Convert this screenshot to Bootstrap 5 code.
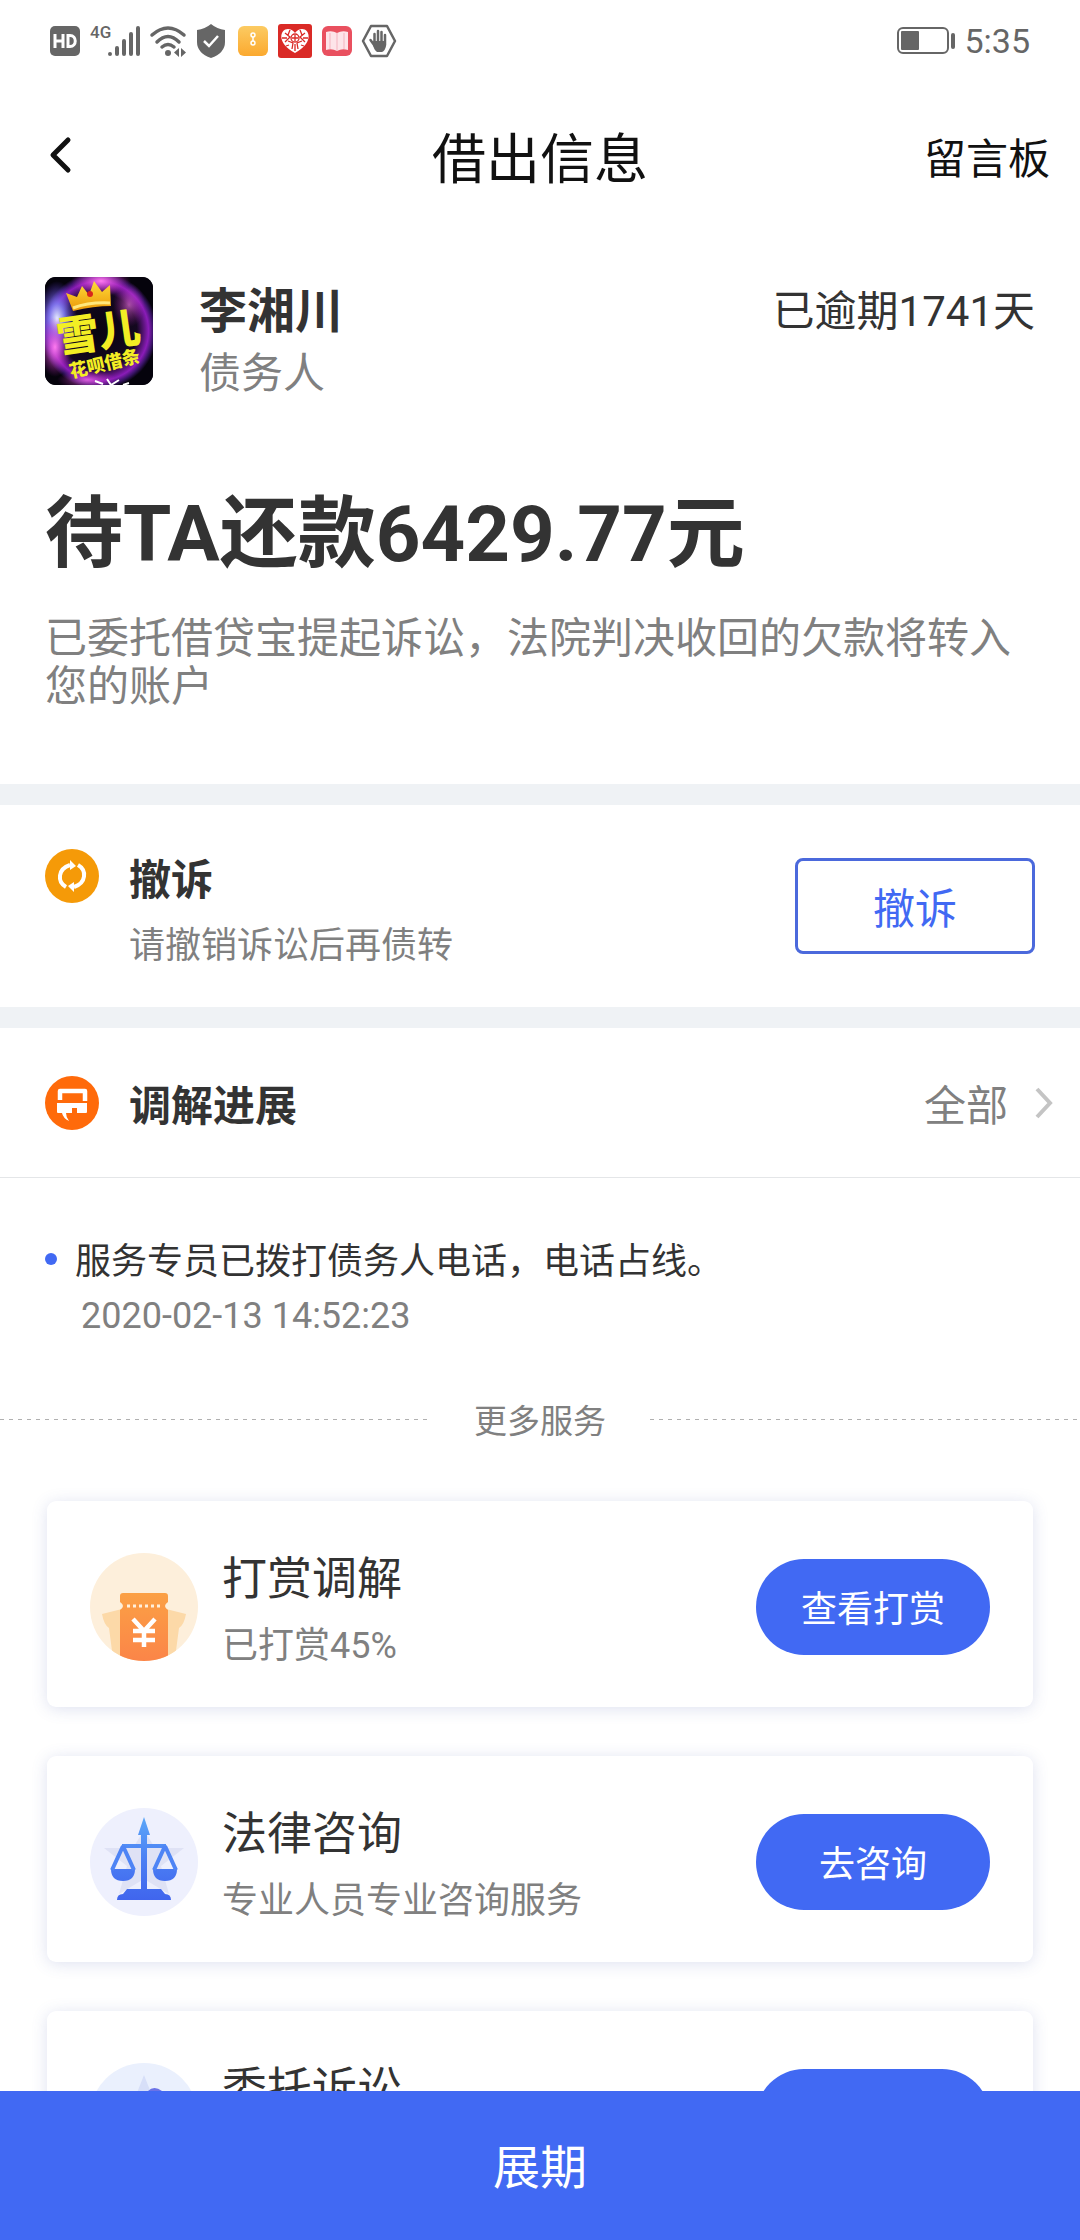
<!DOCTYPE html>
<html lang="zh-CN">
<head>
<meta charset="utf-8">
<meta name="viewport" content="width=device-width, initial-scale=1">
<title>借出信息</title>
<link href="https://cdn.jsdelivr.net/npm/bootstrap@5.3.0/dist/css/bootstrap.min.css" rel="stylesheet">
<style>
  :root { --ink: #333; --muted-ink: #808080; --brand: #4169f3; }
  body { font-family: Roboto, "Noto Sans CJK SC", sans-serif; font-size: 36px; line-height: 48px; color: var(--ink); background: #fff; }
  svg { display: block; flex: none; overflow: visible; }
  .status-bar { height: 82px; padding: 0 50px; color: #666; font-size: 34px; }
  .status-icons { gap: 10px; }
  .title-bar { height: 154px; padding: 4px 30px 0; color: #111; }
  .title-bar h1 { font-size: 54px; line-height: 64px; font-weight: 400; }
  .title-bar a { color: inherit; text-decoration: none; }
  .back { padding-left: 15px; }
  .side { flex: 1 1 0; }
  .t-md { font-size: 42px; line-height: 48px; }
  .t-sm { font-size: 36px; line-height: 48px; }
  .drop { padding-top: 6px; }
  .drop-md { padding-top: 8px; }
  .soft { color: var(--muted-ink); }
  .strong { font-weight: 700; }
  .scroller { min-height: 0; overflow-y: auto; scrollbar-width: none; }
  .scroller::-webkit-scrollbar { display: none; }
  .profile { padding: 41px 45px 0; gap: 46px; }
  .profile .who { padding-top: 3px; }
  .profile .role { padding-top: 6px; }
  .debtor { font-size: 48px; line-height: 64px; font-weight: 700; }
  .summary { padding: 89px 45px 73px; }
  .amount { font-size: 78px; line-height: 96px; font-weight: 700; margin-bottom: 32px; }
  .strip { border-top: 21px solid #eff2f5; }
  .withdraw { height: 223px; padding: 0 45px; }
  .withdraw svg { margin-top: 44px; }
  .withdraw .labels { padding: 14px 0 0 30px; }
  .withdraw .t-sm { margin-top: 17px; }
  .btn-withdraw { width: 240px; height: 96px; border: 3px solid #4b69dc; border-radius: 8px; color: var(--brand); background: #fff; padding: 8px 0 0; }
  .progress-head { padding: 47px 28px 46px 45px; border-bottom: 1px solid #e4e6e8; }
  .progress-head .lead-in { gap: 30px; }
  .progress-head a { color: var(--muted-ink); text-decoration: none; gap: 28px; }
  .log { padding: 54px 45px 0; }
  .bullet { width: 12px; height: 12px; border-radius: 50%; background: var(--brand); margin-right: 18px; }
  .log time { display: block; padding: 6px 0 0 36px; }
  .more { margin-top: 52px; font-size: 33px; line-height: 48px; gap: 44px; }
  .dash { height: 1px; background: repeating-linear-gradient(90deg, #b0b0b0 0 4px, transparent 4px 9px); }
  .services { padding: 55px 47px 0; gap: 49px; }
  .service { height: 206px; border: 0; border-radius: 9px; padding: 6px 43px 0; box-shadow: 0 2px 16px rgba(70, 90, 170, .18); flex: none; }
  .service h2 { font-size: 45px; line-height: 56px; font-weight: 400; margin: 0 0 14px; }
  .service .labels { padding: 8px 0 0 24px; }
  .btn-pill { width: 234px; height: 96px; border-radius: 48px; background: var(--brand); color: #fff; border: 0; font-size: 36px; padding: 6px 0 0; }
  .btn-extend { height: 149px; background: var(--brand); color: #fff; border: 0; border-radius: 0; font-size: 47px; flex: none; padding: 6px 0 0; }
</style>
</head>
<body>
<div class="vh-100 d-flex flex-column overflow-hidden">
  <div class="status-bar d-flex align-items-center justify-content-between flex-shrink-0">
    <div class="status-icons d-flex align-items-center">
      <svg width="30" height="30" viewBox="0 0 30 30"><rect width="30" height="30" rx="5" fill="#666"/><path d="M5 8v14M13 8v14M5 15h8M18 9.500v11h2c7 0 7-11 0-11z" fill="none" stroke="#fff" stroke-width="3"/></svg>
      <svg width="50" height="32" viewBox="0 0 50 32"><text x="0" y="13" font-size="17" font-weight="500" fill="#666" font-family="Roboto, sans-serif">4G</text><g stroke="#666" stroke-width="4" stroke-linecap="round"><path d="M20 29v0M27 23v6M34 16v13M41 9v20M48 3v26"/></g></svg>
      <svg width="36" height="32" viewBox="0 0 36 32"><g fill="none" stroke="#666" stroke-width="3.500" stroke-linecap="round"><path d="M2 10Q18-4 34 10M7 17Q18 6 29 17M12 22q6-5 12 0"/></g><circle cx="18" cy="28" r="3" fill="#666"/><path d="M29 23v9l-5-4.500zM31 23v9l5-4.500z" fill="#666"/></svg>
      <svg width="32" height="34" viewBox="0 0 32 34"><path d="M15 0Q21 5 29 6v12q0 11-14 16Q1 29 1 18V6Q9 5 15 0z" fill="#666"/><path d="M8 17l5 5 9-10" fill="none" stroke="#fff" stroke-width="2.500"/></svg>
      <svg width="30" height="30" viewBox="0 0 30 30"><defs><linearGradient id="gy" x2="0" y2="1"><stop stop-color="#fccb62"/><stop offset="1" stop-color="#fba92f"/></linearGradient></defs><rect width="30" height="30" rx="6" fill="url(#gy)"/><g fill="none" stroke="#fff" stroke-width="1.500"><circle cx="15" cy="9" r="2"/><circle cx="15" cy="17" r="2"/><path d="M15 11v4"/></g></svg>
      <svg width="34" height="34" viewBox="0 0 34 34"><rect width="34" height="34" rx="3" fill="#da2a26"/><path d="M17 29C-2 19 2 5 10 5q4 0 7 4 3-4 7-4c8 0 12 14-7 24z" fill="#fff"/><g fill="none" stroke="#da2a26" stroke-width="1.300"><path d="M7 9l5 4-5 5M27 9l-5 4 5 5M12 6l-2 5M22 6l2 5M10 17l5 2-1 6M24 17l-5 2 1 6M4 14h5M30 14h-5M17 20v7M11 21l-3 1M23 21l3 1"/><circle cx="17" cy="14" r="4"/><path d="M14 14h6M17 11v6"/></g></svg>
      <svg width="30" height="30" viewBox="0 0 30 30"><rect width="30" height="30" rx="6" fill="#e9505f"/><path d="M4 6q6-2 11 1 5-3 11-1v18q-6-2-11 1-5-3-11-1z" fill="#fde4e9"/><path d="M15 7v18M8 7v16M22 7v16" stroke="#f4b3bf" stroke-width="1"/></svg>
      <svg width="34" height="34" viewBox="0 0 34 34"><path d="M9 2h16l8 15-8 15H9L1 17z" fill="#fff" stroke="#666" stroke-width="2.500" stroke-linejoin="round"/><g stroke="#666" stroke-width="2.500" stroke-linecap="round"><path d="M12.500 10v10M16 7v12M19.500 8v12M23 11v10M8.500 16l5 7"/></g><path d="M11.500 17H24v5q-1 5-4 6h-5q-3-2-4-7z" fill="#666"/></svg>
    </div>
    <div class="d-flex align-items-center">
      <svg width="59" height="28" viewBox="0 0 59 28"><rect x="1" y="1" width="50" height="25" rx="5" fill="none" stroke="#666" stroke-width="2"/><rect x="4" y="4" width="18" height="19" rx="1" fill="#666"/><rect x="54" y="6" width="4" height="16" rx="2" fill="#666"/></svg>
      <span class="ps-2">5:35</span>
    </div>
  </div>

  <header class="title-bar d-flex align-items-center flex-shrink-0">
    <div class="side"><a href="#" class="back d-inline-block" aria-label="返回"><svg width="30" height="40" viewBox="0 0 30 40"><path d="M23 5L8 20l15 15" fill="none" stroke="#111" stroke-width="5" stroke-linecap="round" stroke-linejoin="round"/></svg></a></div>
    <h1 class="m-0">借出信息</h1>
    <div class="side text-end"><a href="#" class="t-md">留言板</a></div>
  </header>

  <main class="scroller flex-grow-1">
    <section class="profile d-flex align-items-start">
      <svg width="108" height="108" viewBox="0 0 108 108" role="img" aria-label="头像">
        <defs>
          <clipPath id="av"><rect width="108" height="108" rx="11"/></clipPath>
          <radialGradient id="ring" cx=".5" cy=".5" r=".54"><stop offset="0" stop-color="#080410"/><stop offset=".65" stop-color="#14081f"/><stop offset=".85" stop-color="#8a1cb8"/><stop offset=".93" stop-color="#3a1468"/><stop offset="1" stop-color="#05030c"/></radialGradient>
          <radialGradient id="glow"><stop stop-color="#eaf0ff"/><stop offset=".4" stop-color="#7f7bf2" stop-opacity=".9"/><stop offset="1" stop-color="#5a32d8" stop-opacity="0"/></radialGradient>
          <radialGradient id="pink"><stop stop-color="#ff7bf0"/><stop offset="1" stop-color="#c020c0" stop-opacity="0"/></radialGradient>
          <linearGradient id="crown" x2="0" y2="1"><stop stop-color="#ffdc3a"/><stop offset="1" stop-color="#eb9808"/></linearGradient>
        </defs>
        <g clip-path="url(#av)">
          <rect width="108" height="108" fill="#05030c"/>
          <rect width="108" height="108" fill="url(#ring)"/>
          <ellipse cx="12" cy="42" rx="20" ry="38" fill="url(#glow)"/>
          <ellipse cx="10" cy="70" rx="16" ry="30" fill="url(#pink)"/>
          <ellipse cx="56" cy="4" rx="30" ry="15" fill="url(#pink)"/>
          <ellipse cx="84" cy="28" rx="16" ry="22" fill="url(#pink)" opacity=".6"/>
          <ellipse cx="42" cy="103" rx="30" ry="10" fill="url(#pink)" opacity=".7"/>
          <path d="M28 34L21 16l11 4 5-11 7 9 5-14 8 11 8-7 1 21q-17 0-38 5z" fill="url(#crown)"/>
          <path d="M28 31q16-6 37-5" fill="none" stroke="#ffe77c" stroke-width="3"/><circle cx="45" cy="17" r="3" fill="#d8261c"/>
          <g font-family="'Noto Sans CJK SC', sans-serif" font-weight="900" fill="#f3ee24">
            <text transform="rotate(-8 14 76)" x="14" y="76" font-size="42">雪儿</text>
            <text transform="rotate(-13 26 101)" x="26" y="101" font-size="18">花呗借条</text>
          </g>
          <path d="M50 104l8 3M62 102l4 6M74 103l-8 5M84 106l-6 2" stroke="#fff" stroke-width="2"/>
        </g>
      </svg>
      <div class="who flex-grow-1">
        <div class="d-flex justify-content-between align-items-center"><span class="debtor">李湘川</span><span class="t-md">已逾期1741天</span></div>
        <div class="role t-md soft">债务人</div>
      </div>
    </section>
    <section class="summary">
      <div class="amount">待TA还款6429.77元</div>
      <p class="t-md soft m-0">已委托借贷宝提起诉讼，法院判决收回的欠款将转入您的账户</p>
    </section>

    <section class="withdraw strip d-flex align-items-center">
      <svg class="align-self-start" width="54" height="54" viewBox="0 0 54 54"><circle cx="27" cy="27" r="27" fill="#f59a08"/><g fill="none" stroke="#fff" stroke-width="4"><path d="M21 38Q14 34 15 26.500t10-10.500"/><path d="M33 16q7 4 6 11.500t-10 10.500"/></g><path d="M25 11l6 6-6 4zM29 43l-6-6 6-4z" fill="#fff"/></svg>
      <div class="labels flex-grow-1">
        <div class="t-md strong">撤诉</div>
        <div class="t-sm soft">请撤销诉讼后再债转</div>
      </div>
      <button type="button" class="btn btn-withdraw t-md">撤诉</button>
    </section>

    <section class="strip">
      <div class="progress-head d-flex align-items-center justify-content-between">
        <div class="lead-in d-flex align-items-center">
          <svg width="54" height="54" viewBox="0 0 54 54"><circle cx="27" cy="27" r="27" fill="#ff6a0a"/><path d="M15 24v-9h25v10" fill="none" stroke="#fff" stroke-width="4.500" stroke-linejoin="round"/><path d="M12 27h30v9q0 1-1 1h-9v-5h-5v5h-6q0 4 3 8-6-3-7-8h-4q-1 0-1-1z" fill="#fff"/></svg>
          <span class="drop-md t-md strong">调解进展</span>
        </div>
        <a href="#" class="t-md d-flex align-items-center"><span class="drop-md">全部</span><svg width="16" height="30" viewBox="0 0 16 30"><path d="M1 1l13 14L1 29" fill="none" stroke="#c4c4c4" stroke-width="4"/></svg></a>
      </div>
      <div class="log">
        <div class="t-sm d-flex align-items-center"><span class="bullet"></span><span class="drop">服务专员已拨打债务人电话，电话占线。</span></div>
        <time class="t-sm soft">2020-02-13 14:52:23</time>
      </div>
    </section>

    <div class="more soft d-flex align-items-center"><span class="dash flex-grow-1"></span><span class="drop">更多服务</span><span class="dash flex-grow-1"></span></div>

    <section class="services d-flex flex-column">
      <article class="card service flex-row align-items-center">
        <svg width="108" height="108" viewBox="0 0 108 108"><defs><clipPath id="cc"><circle cx="54" cy="54" r="54"/></clipPath><linearGradient id="og" x2="0" y2="1"><stop stop-color="#fba045"/><stop offset="1" stop-color="#fb8548"/></linearGradient></defs><g clip-path="url(#cc)"><rect width="108" height="108" fill="#fdefdb"/><path d="M12 61l32-8v60H24L19 75q-5-3-7-14z" fill="#fcd9a8"/><path d="M96 61l-32-8v60h20l5-38q5-3 7-14z" fill="#fcd9a8"/><path d="M33 40h42q3 0 3 3v6q-6 4 0 8v51H30V57q6-4 0-8v-6q0-3 3-3z" fill="url(#og)"/><path d="M37 53h35" stroke="#fff0dc" stroke-width="3" stroke-dasharray="3 3"/><path d="M43 66l11 12 11-12M54 78v16M43 78h22M43 87h22" fill="none" stroke="#fff" stroke-width="4.500"/></g></svg>
        <div class="labels flex-grow-1"><h2>打赏调解</h2><div class="t-sm soft">已打赏45%</div></div>
        <button type="button" class="btn btn-pill">查看打赏</button>
      </article>
      <article class="card service flex-row align-items-center">
        <svg width="108" height="108" viewBox="0 0 108 108"><defs><linearGradient id="bg1" gradientUnits="userSpaceOnUse" x1="0" y1="10" x2="0" y2="92"><stop stop-color="#5ba6f8"/><stop offset=".5" stop-color="#4b7ff4"/><stop offset="1" stop-color="#4065ed"/></linearGradient></defs><circle cx="54" cy="54" r="54" fill="#eef0fd"/><path d="M54 22l11 18h29L71 58l8 28-25-15-25 15 8-28-23-18h29z" fill="#dfe2f5"/><g fill="url(#bg1)"><path d="M54 9l6 18h-3v54h14l4 5q6 0 6 6H27q0-6 6-6l4-5h14V27h-3z"/><path d="M32 36h44v4H32z"/><path d="M21 61h24q0 12-12 12T21 61zM63 61h24q0 12-12 12T63 61z"/></g><path d="M33 38L22 62M33 38l11 24M75 38L64 62M75 38l11 24" stroke="#4e84f5" stroke-width="4" fill="none"/></svg>
        <div class="labels flex-grow-1"><h2>法律咨询</h2><div class="t-sm soft">专业人员专业咨询服务</div></div>
        <button type="button" class="btn btn-pill">去咨询</button>
      </article>
      <article class="card service flex-row align-items-center">
        <svg width="108" height="108" viewBox="0 0 108 108"><circle cx="54" cy="54" r="54" fill="#eaf0fd"/><path d="M54 12l11 28h29L71 58l8 28-25-15-25 15 8-28-23-18h29z" fill="#d7dff8"/><path d="M58 28q6-6 14 0l6 10-12 10-12-12z" fill="#6b72e6"/></svg>
        <div class="labels flex-grow-1"><h2>委托诉讼</h2><div class="t-sm">&nbsp;</div></div>
        <button type="button" class="btn btn-pill" aria-label="委托诉讼"></button>
      </article>
    </section>
  </main>

  <button type="button" class="btn btn-extend w-100">展期</button>
</div>
<script src="https://cdn.jsdelivr.net/npm/bootstrap@5.3.0/dist/js/bootstrap.bundle.min.js"></script>
</body>
</html>
